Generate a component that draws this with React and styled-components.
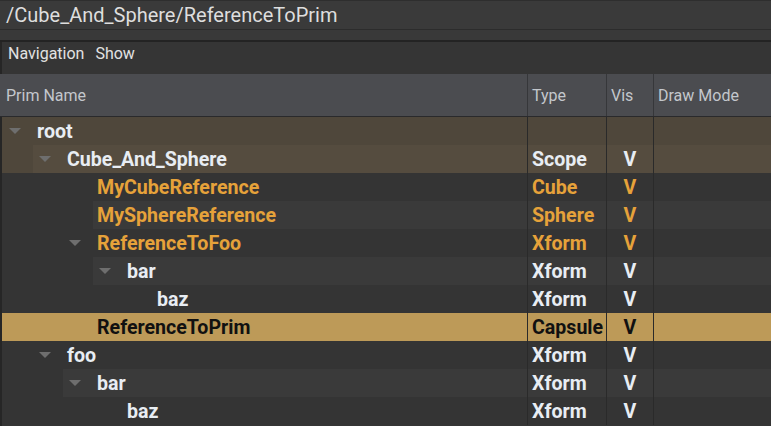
import React from "react";
import styled, { createGlobalStyle } from "styled-components";

const Global = createGlobalStyle`
  html, body { margin: 0; padding: 0; background: #353535; }
  body { font-family: Roboto, "Liberation Sans", sans-serif; overflow: hidden; }
  * { box-sizing: border-box; }
`;

const Page = styled.div`
  width: 771px;
  height: 426px;
  display: flex;
  flex-direction: column;
  background: #353535;
  overflow: hidden;
`;

const PathBar = styled.div`
  height: 30px;
  background: #3a3a3a;
  border-top: 1px solid #2e2e2e;
  border-bottom: 1px solid #2c2c2c;
  padding-left: 6px;
  color: #dedede;
  font-size: 20px;
  line-height: 28px;
  white-space: nowrap;
`;

const Band = styled.div`
  height: 12px;
  background: #393939;
  border-bottom: 2px solid #232323;
`;

const Panel = styled.div`
  flex: 1;
  display: flex;
  flex-direction: column;
  border-left: 2px solid #262626;
  min-height: 0;
`;

const MenuBar = styled.div`
  height: 32px;
  display: flex;
  align-items: flex-start;
  gap: 11px;
  padding: 2px 0 0 6px;
  line-height: 20px;
  background: #353535;
  color: #e2e2e2;
  font-size: 16px;
`;

const MenuItem = styled.span``;

const Header = styled.div`
  display: grid;
  grid-template-columns: 527px 79px 47px 1fr;
  height: 43px;
  background: #4b4c50;
  border-bottom: 1px solid #2a2a2c;
  margin-left: -2px;
`;

const HeadCell = styled.div`
  display: flex;
  align-items: center;
  padding-left: ${(p) => (p.$first ? "6px" : "4px")};
  border-left: ${(p) => (p.$first ? "none" : "1px solid #36373a")};
  color: #c3c7cc;
  font-size: 16px;
  padding-top: 1px;
`;

const Row = styled.div`
  display: grid;
  grid-template-columns: 525px 79px 47px 1fr;
  height: 28px;
  font-size: 19.6px;
  font-weight: 700;
  background: ${(p) => p.$bg};
`;

const NameCell = styled.div`
  display: flex;
  padding-left: ${(p) => 1 + p.$offset}px;
  min-width: 0;
`;

const ItemBody = styled.div`
  flex: 1;
  display: flex;
  align-items: center;
  padding-left: ${(p) => p.$pad}px;
  background: ${(p) => p.$bg};
  color: ${(p) => p.$color};
  white-space: nowrap;
`;

const Arrow = styled.span`
  width: 30px;
  height: 28px;
  flex: none;
  display: flex;
  align-items: center;
  justify-content: center;
  margin-right: 4px;
  padding-right: 6px;
  &::before {
    content: "";
    width: 0;
    height: 0;
    border-left: 6px solid transparent;
    border-right: 6px solid transparent;
    border-top: 6px solid #6e6e6e;
  }
`;

const Cell = styled.div`
  display: flex;
  align-items: center;
  justify-content: ${(p) => (p.$center ? "center" : "flex-start")};
  padding-left: ${(p) => (p.$center ? 0 : 4)}px;
  border-left: 1px solid #2a2a2a;
  background: ${(p) => p.$bg};
  color: ${(p) => p.$color};
  white-space: nowrap;
`;

const WHITE = "#e8edf3";
const ORANGE = "#e6a23a";
const BLACK = "#111111";

const rows = [
  { name: "root", depth: 0, kids: true, type: "", vis: "", tone: "brown", color: WHITE },
  { name: "Cube_And_Sphere", depth: 1, kids: true, type: "Scope", vis: "V", tone: "brown", color: WHITE },
  { name: "MyCubeReference", depth: 2, kids: false, type: "Cube", vis: "V", color: ORANGE },
  { name: "MySphereReference", depth: 2, kids: false, type: "Sphere", vis: "V", color: ORANGE },
  { name: "ReferenceToFoo", depth: 2, kids: true, type: "Xform", vis: "V", color: ORANGE },
  { name: "bar", depth: 3, kids: true, type: "Xform", vis: "V", color: WHITE },
  { name: "baz", depth: 4, kids: false, type: "Xform", vis: "V", color: WHITE },
  { name: "ReferenceToPrim", depth: 2, kids: false, type: "Capsule", vis: "V", selected: true, color: BLACK },
  { name: "foo", depth: 1, kids: true, type: "Xform", vis: "V", color: WHITE },
  { name: "bar", depth: 2, kids: true, type: "Xform", vis: "V", color: WHITE },
  { name: "baz", depth: 3, kids: false, type: "Xform", vis: "V", color: WHITE },
];

const palette = {
  brown: ["#4f473b", "#554c3f"],
  dark: ["#343434", "#3a3a3a"],
};

export default function App() {
  return (
    <Page>
      <Global />
      <PathBar>/Cube_And_Sphere/ReferenceToPrim</PathBar>
      <Band />
      <Panel>
        <MenuBar>
          <MenuItem>Navigation</MenuItem>
          <MenuItem>Show</MenuItem>
        </MenuBar>
        <Header>
          <HeadCell $first>Prim Name</HeadCell>
          <HeadCell>Type</HeadCell>
          <HeadCell>Vis</HeadCell>
          <HeadCell>Draw Mode</HeadCell>
        </Header>
        {rows.map((r, i) => {
          const [base, alt] = palette[r.tone || "dark"];
          const isAlt = i % 2 === 1;
          const rowBg = r.selected ? "#bd9a58" : base;
          const cellBg = r.selected ? "#bd9a58" : isAlt ? alt : base;
          const indent = 30 * r.depth + (r.kids ? 0 : 30);
          const offset = r.selected ? 0 : indent;
          const pad = r.selected ? indent + 4 : r.kids ? 0 : 4;
          return (
            <Row key={i} $bg={rowBg}>
              <NameCell $offset={offset}>
                <ItemBody $pad={pad} $bg={cellBg} $color={r.color}>
                  {r.kids && <Arrow />}
                  {r.name}
                </ItemBody>
              </NameCell>
              <Cell $bg={cellBg} $color={r.color}>{r.type}</Cell>
              <Cell $center $bg={cellBg} $color={r.color}>{r.vis}</Cell>
              <Cell $bg={cellBg} $color={r.color} />
            </Row>
          );
        })}
      </Panel>
    </Page>
  );
}
